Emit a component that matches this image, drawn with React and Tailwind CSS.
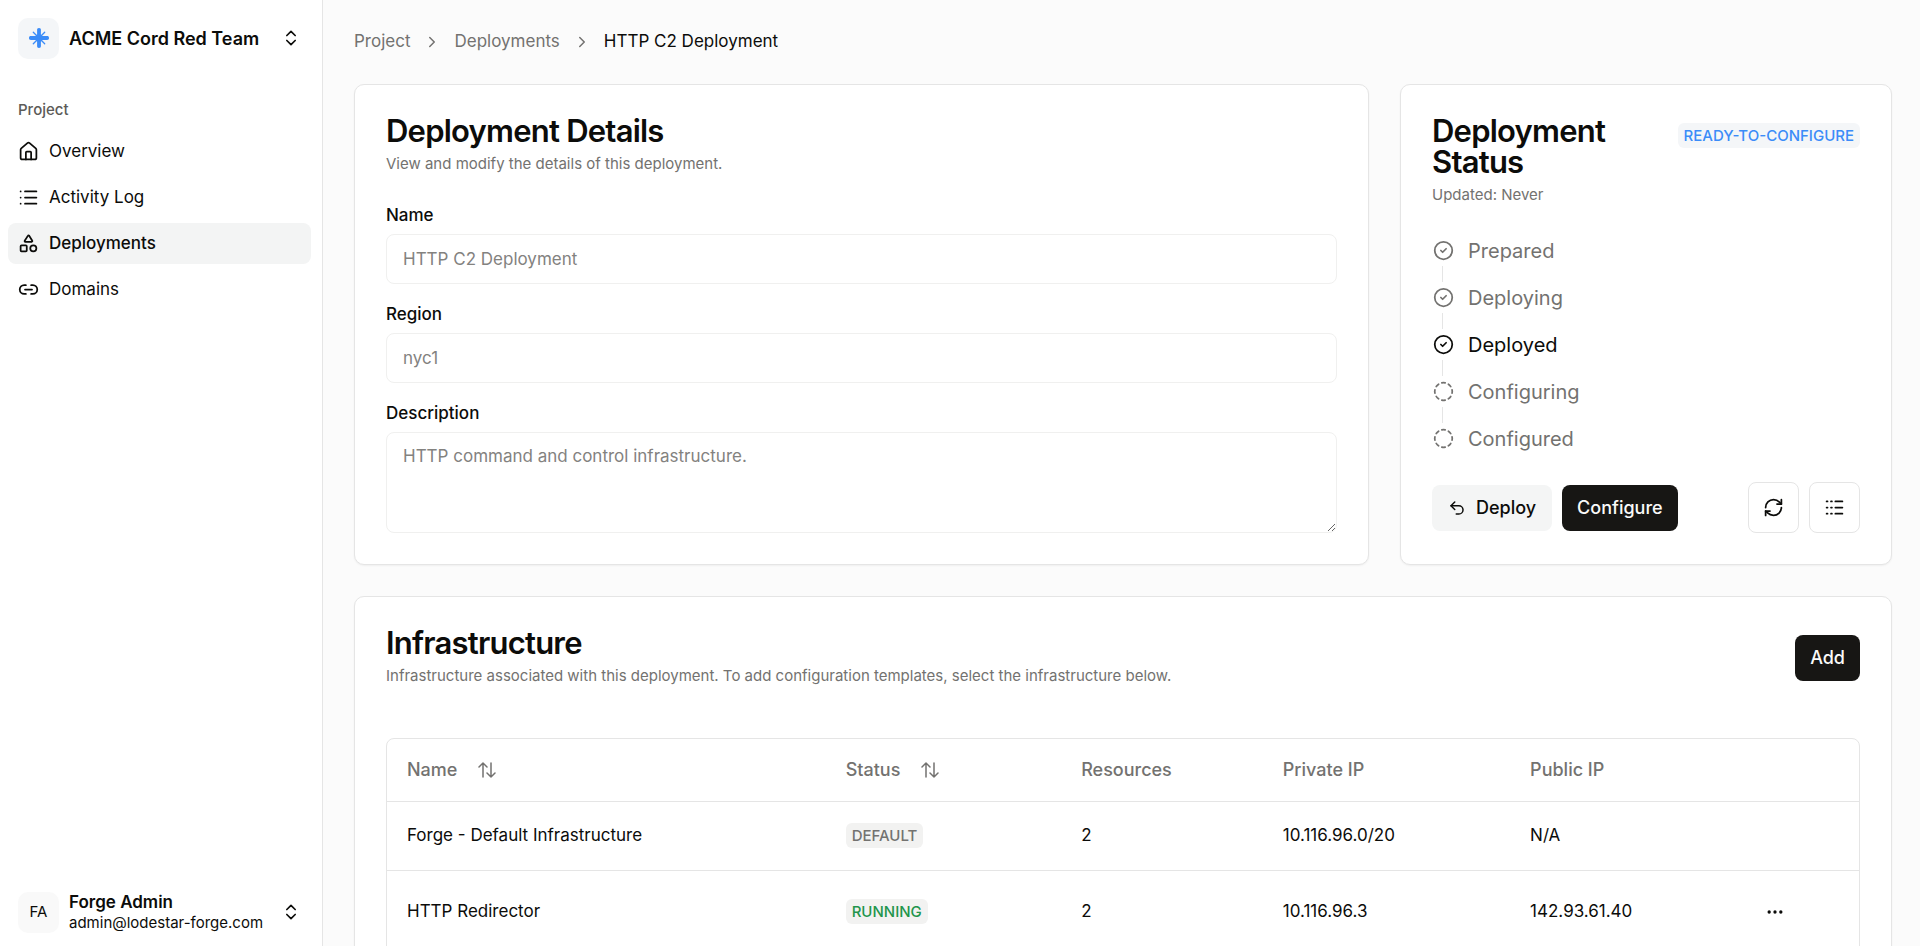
import {
  ChevronRight, ChevronsUpDown, CircleCheck, CircleDashed,
  Ellipsis, House, Link2, List, Logs, RefreshCw, Shapes, Undo2,
} from "lucide-react";

const navItems = [
  { label: "Overview", icon: House },
  { label: "Activity Log", icon: List },
  { label: "Deployments", icon: Shapes, active: true },
  { label: "Domains", icon: Link2 },
];

const steps = [
  { label: "Prepared", done: true },
  { label: "Deploying", done: true },
  { label: "Deployed", done: true, current: true },
  { label: "Configuring" },
  { label: "Configured" },
];

const rows = [
  { name: "Forge - Default Infrastructure", status: "DEFAULT", resources: 2, privateIp: "10.116.96.0/20", publicIp: "N/A" },
  { name: "HTTP Redirector", status: "RUNNING", resources: 2, privateIp: "10.116.96.3", publicIp: "142.93.61.40", menu: true },
];

function Logo() {
  return (
    <svg viewBox="0 0 20 20" className="size-5 text-[#3b8cf8]" fill="currentColor" aria-hidden="true">
      <path d="M10 0c1.400 0 1.900.7 1.900 1.900v4.600l1.600 1.600h4.600c1.200 0 1.900.5 1.900 1.900s-.7 1.900-1.900 1.900h-4.600l-1.600 1.600v4.600c0 1.200-.5 1.900-1.900 1.900s-1.900-.7-1.900-1.900v-4.600l-1.600-1.600H1.900C.7 11.900 0 11.400 0 10s.7-1.900 1.900-1.900h4.600l1.600-1.600V1.900C8.100.7 8.600 0 10 0z" />
      <path d="M4.300 4.300l11.400 11.400M15.700 4.300L4.300 15.700" stroke="currentColor" strokeWidth="1.300" strokeLinecap="round" />
    </svg>
  );
}

function Sidebar() {
  return (
    <aside className="flex w-[323px] shrink-0 flex-col justify-between border-r border-[#e5e5e5] bg-white">
      <div>
        <button type="button" className="flex h-[76px] w-full items-center gap-2.5 pr-[21px] pl-[18px] text-left">
          <span className="flex size-[41px] items-center justify-center rounded-[10px] bg-[#f4f6f8]">
            <Logo />
          </span>
          <span className="flex-1 text-[18px] font-semibold">ACME Cord Red Team</span>
          <ChevronsUpDown size={20} strokeWidth={2} />
        </button>
        <h2 className="mt-6 px-[18px] text-[15px] leading-5 font-medium text-[#5c5b58]">Project</h2>
        <nav className="mt-[11px] flex flex-col gap-[5px] pr-[11px] pl-2">
          {navItems.map(({ label, icon: Icon, active }) => (
            <a
              key={label}
              href="#"
              className={`flex h-[41px] items-center gap-2.5 rounded-lg px-2.5 text-[17px] ${active ? "bg-[#f3f4f4] font-medium" : ""}`}
            >
              <Icon size={21} strokeWidth={2} />
              {label}
            </a>
          ))}
        </nav>
      </div>
      <button type="button" className="flex h-[68px] items-center gap-2.5 pr-[21px] pl-[18px] text-left">
        <span className="flex size-[41px] items-center justify-center rounded-[10px] bg-[#f9f9f9] text-[15px]">FA</span>
        <span className="flex flex-1 flex-col">
          <span className="text-[17px] leading-[22px] font-semibold">Forge Admin</span>
          <span className="text-[15px] leading-5">admin@lodestar-forge.com</span>
        </span>
        <ChevronsUpDown size={20} strokeWidth={2} />
      </button>
    </aside>
  );
}

function Card({ className = "", children }) {
  return (
    <section className={`rounded-[10px] border border-[#e5e5e5] bg-white px-[31px] pt-[30px] pb-[31px] shadow-xs ${className}`}>
      {children}
    </section>
  );
}

function CardHeading({ title, note }) {
  return (
    <div>
      <h1 className="text-[31px] leading-[31px] font-semibold tracking-tight">{title}</h1>
      <p className="mt-1.5 text-[15px] leading-6 text-[#737270]">{note}</p>
    </div>
  );
}

const fieldClass =
  "block w-full rounded-lg border border-[#f0f0ef] bg-white px-4 text-[17px] text-[#83827f] outline-none";

function Badge({ tone, children }) {
  const tones = {
    blue: "bg-[#f4f6f8] text-[#3b8cf8]",
    gray: "bg-[#f2f2f1] text-[#737270]",
    green: "bg-[#f2f2f1] text-[#22954b]",
  };
  return (
    <span className={`inline-block rounded-md px-1.5 text-[15px] leading-[25px] font-medium whitespace-nowrap ${tones[tone]}`}>
      {children}
    </span>
  );
}

function Details() {
  return (
    <Card>
      <CardHeading title="Deployment Details" note="View and modify the details of this deployment." />
      <form className="mt-[27px] flex flex-col gap-[18px]">
        <div>
          <label htmlFor="name" className="mb-[7px] block text-[17px] leading-6 font-medium">Name</label>
          <input id="name" readOnly defaultValue="HTTP C2 Deployment" className={`h-[50px] ${fieldClass}`} />
        </div>
        <div>
          <label htmlFor="region" className="mb-[7px] block text-[17px] leading-6 font-medium">Region</label>
          <input id="region" readOnly defaultValue="nyc1" className={`h-[50px] ${fieldClass}`} />
        </div>
        <div>
          <label htmlFor="description" className="mb-[7px] block text-[17px] leading-6 font-medium">Description</label>
          <textarea
            id="description"
            readOnly
            defaultValue="HTTP command and control infrastructure."
            className={`h-[101px] py-[10px] leading-[26px] ${fieldClass}`}
          />
        </div>
      </form>
    </Card>
  );
}

function Status() {
  return (
    <Card className="flex flex-col">
      <div className="flex items-start justify-between gap-4">
        <CardHeading title="Deployment Status" note="Updated: Never" />
        <div className="pt-2">
          <Badge tone="blue">READY-TO-CONFIGURE</Badge>
        </div>
      </div>
      <ol className="mt-[29px]">
        {steps.map(({ label, done, current }, i) => {
          const Icon = done ? CircleCheck : CircleDashed;
          return (
            <li key={label} className={current ? "text-[#0c0c0a]" : "text-[#737270]"}>
              {i > 0 && <div className="my-px ml-2.5 h-4 w-px bg-[#e5e5e5]" />}
              <div className="flex h-[29px] items-center gap-3.5 pl-px text-[20px]">
                <Icon size={21} strokeWidth={2} />
                {label}
              </div>
            </li>
          );
        })}
      </ol>
      <div className="mt-auto flex items-center justify-between">
        <div className="flex items-center gap-2.5">
          <button type="button" className="flex h-[46px] items-center gap-2.5 rounded-lg bg-[#f4f5f5] px-4 text-[18px] font-medium">
            <Undo2 size={18} strokeWidth={2} />
            Deploy
          </button>
          <button type="button" className="h-[46px] rounded-lg bg-[#171614] px-[15px] text-[18px] font-medium text-[#fafaf9]">
            Configure
          </button>
        </div>
        <div className="flex items-center gap-2.5">
          <button type="button" aria-label="Refresh" className="flex size-[51px] items-center justify-center rounded-lg border border-[#e5e5e5]">
            <RefreshCw size={21} strokeWidth={2} />
          </button>
          <button type="button" aria-label="Logs" className="flex size-[51px] items-center justify-center rounded-lg border border-[#e5e5e5]">
            <Logs size={21} strokeWidth={2} />
          </button>
        </div>
      </div>
    </Card>
  );
}

function SortIcon() {
  return (
    <svg viewBox="0 0 20 20" className="size-5" fill="none" stroke="currentColor" strokeWidth="1.500" strokeLinecap="round" strokeLinejoin="round" aria-hidden="true">
      <path d="M6 17V3M2 7l4-4 4 4M14 3v14M10 13l4 4 4-4" />
    </svg>
  );
}

function Infrastructure() {
  return (
    <Card>
      <div className="flex items-center justify-between">
        <CardHeading
          title="Infrastructure"
          note="Infrastructure associated with this deployment. To add configuration templates, select the infrastructure below."
        />
        <button type="button" className="h-[46px] rounded-lg bg-[#171614] px-[15px] text-[18px] font-medium text-[#fafaf9]">Add</button>
      </div>
      <div className="mt-[50px] overflow-hidden rounded-lg border border-[#e5e5e5]">
        <table className="w-full table-fixed text-left text-[17px]">
          <colgroup>
            <col className="w-[29.8%]" />
            <col className="w-[16%]" />
            <col className="w-[13.7%]" />
            <col className="w-[16.8%]" />
            <col className="w-[15.3%]" />
            <col />
          </colgroup>
          <thead className="text-[18px] text-[#737270]">
            <tr className="h-[62px] border-b border-[#e5e5e5]">
              <th className="px-5 font-medium">
                <button type="button" className="flex items-center gap-5">Name <SortIcon /></button>
              </th>
              <th className="px-5 font-medium">
                <button type="button" className="flex items-center gap-5">Status <SortIcon /></button>
              </th>
              <th className="px-5 font-medium">Resources</th>
              <th className="px-5 font-medium">Private IP</th>
              <th className="px-5 font-medium">Public IP</th>
              <th className="px-5" aria-label="Actions" />
            </tr>
          </thead>
          <tbody>
            {rows.map((row) => (
              <tr key={row.name} className={`border-b border-[#e5e5e5] ${row.menu ? "h-[83px]" : "h-[69px]"}`}>
                <td className="px-5">{row.name}</td>
                <td className="px-5">
                  <Badge tone={row.status === "RUNNING" ? "green" : "gray"}>{row.status}</Badge>
                </td>
                <td className="px-5">{row.resources}</td>
                <td className="px-5">{row.privateIp}</td>
                <td className="px-5">{row.publicIp}</td>
                <td className="px-5">
                  {row.menu && (
                    <button type="button" aria-label="Open menu" className="flex size-10 items-center justify-center">
                      <Ellipsis size={20} strokeWidth={2} />
                    </button>
                  )}
                </td>
              </tr>
            ))}
          </tbody>
        </table>
      </div>
    </Card>
  );
}

export default function App() {
  return (
    <div className="flex h-screen overflow-hidden bg-[#fbfbfb] font-['Inter',sans-serif] text-[#0c0c0a]">
      <Sidebar />
      <main className="min-w-0 flex-1 overflow-hidden pt-[29px] pr-7 pl-[31px]">
        <nav aria-label="Breadcrumb" className="flex h-[26px] items-center gap-[13px] text-[17px] text-[#737270]">
          <a href="#">Project</a>
          <ChevronRight size={18} strokeWidth={2} />
          <a href="#">Deployments</a>
          <ChevronRight size={18} strokeWidth={2} />
          <span aria-current="page" className="text-[#0c0c0a]">HTTP C2 Deployment</span>
        </nav>
        <div className="mt-[29px] grid grid-cols-[1015fr_492fr] gap-[31px]">
          <Details />
          <Status />
        </div>
        <div className="mt-[31px]">
          <Infrastructure />
        </div>
      </main>
    </div>
  );
}
